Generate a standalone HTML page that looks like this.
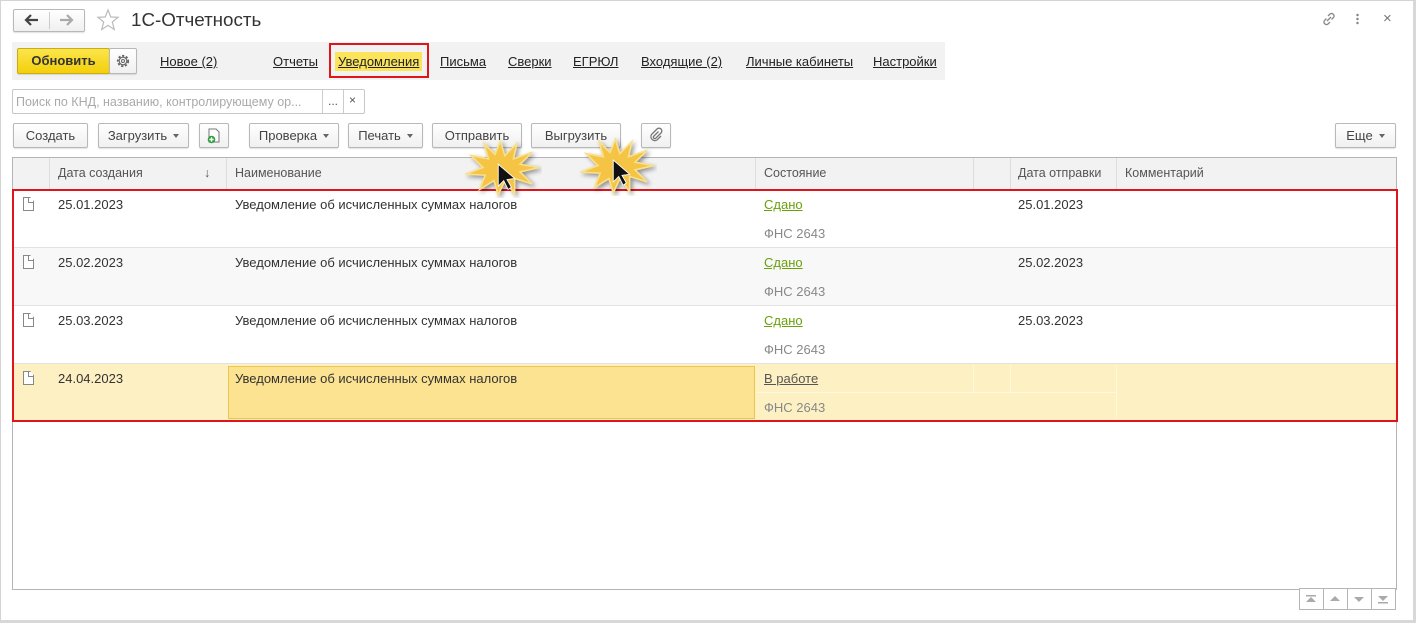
<!DOCTYPE html>
<html><head><meta charset="utf-8"><style>
*{box-sizing:border-box;margin:0;padding:0}
body{width:1416px;height:623px;background:#fff;font-family:"Liberation Sans",Arial,sans-serif;font-size:12px;color:#333;position:relative;overflow:hidden}
.a{position:absolute}
.frame{left:0;top:0;width:1416px;height:623px;border:1px solid #d4d4d4;border-right:3px solid #d8d8d8;border-bottom:3px solid #d8d8d8}
.btn{position:absolute;height:25px;border:1px solid #b8b8b8;border-radius:2px;background:linear-gradient(#fff,#f0f0f0);box-shadow:0 1px 1px rgba(0,0,0,.12);font-size:13px;color:#444;text-align:center;line-height:23px}
.dd:after{content:"";display:inline-block;border:3px solid transparent;border-top:4px solid #666;margin-left:6px;vertical-align:-1px}
.lnk{position:absolute;top:54px;font-size:13px;color:#222;text-decoration:underline}
.cell{position:absolute;font-size:13px;color:#333}
.hdr{position:absolute;top:166px;font-size:12.5px;color:#555}
.vl{position:absolute;width:1px;background:#ddd}
.doc{position:absolute;width:11px;height:14px;border:1px solid #888;background:#fff;clip-path:polygon(0 0,65% 0,100% 30%,100% 100%,0 100%)}
.doc:after{content:"";position:absolute;right:-1px;top:-1px;width:5px;height:5px;border-left:1px solid #888;border-bottom:1px solid #888}
.green{color:#6aa10c;text-decoration:underline}
.grey{color:#888}
</style></head><body>
<div class="a frame"></div>
<!-- nav -->
<div class="btn" style="left:13px;top:9px;width:72px;height:23px"></div>
<div class="a" style="left:49px;top:12px;width:1px;height:17px;background:#ccc"></div>
<svg class="a" style="left:22px;top:12px" width="18" height="16" viewBox="0 0 18 16"><path d="M16 8H4M9 3L4 8l5 5" fill="none" stroke="#444" stroke-width="2.2"/></svg>
<svg class="a" style="left:58px;top:12px" width="18" height="16" viewBox="0 0 18 16"><path d="M2 8h12M9 3l5 5-5 5" fill="none" stroke="#aaa" stroke-width="2.2"/></svg>
<svg class="a" style="left:96px;top:8px" width="24" height="24" viewBox="0 0 24 24"><polygon points="12,2 14.8,9 22,9.3 16.3,14 18.3,21.5 12,17.3 5.7,21.5 7.7,14 2,9.3 9.2,9" fill="none" stroke="#bbb" stroke-width="1.2"/></svg>
<div class="a" style="left:131px;top:9px;font-size:18.8px;color:#333">1С-Отчетность</div>
<svg class="a" style="left:1320px;top:10px" width="18" height="18" viewBox="0 0 18 18"><g fill="none" stroke="#888" stroke-width="1.3"><path d="M8 6l2-2a2.5 2.5 0 013.5 3.5l-2 2"/><path d="M10 12l-2 2a2.5 2.5 0 01-3.5-3.5l2-2"/><path d="M7 11l4-4"/></g></svg>
<div class="a" style="left:1356px;top:13px;width:3px;height:12px;background:radial-gradient(circle,#888 1px,transparent 1.5px) 0 0/3px 4px"></div>
<div class="a" style="left:1383px;top:10px;font-size:15px;color:#777">×</div>
<!-- tab bar -->
<div class="a" style="left:12px;top:42px;width:933px;height:38px;background:#f2f2f2"></div>
<div class="btn" style="left:17px;top:48px;width:93px;height:26px;background:linear-gradient(#fbe54b,#f3cf0b);border-color:#c9ad12;font-weight:bold;color:#333;line-height:24px;font-size:13px">Обновить</div>
<div class="btn" style="left:109px;top:48px;width:28px;height:26px"></div>
<svg class="a" style="left:115px;top:53px" width="16" height="16" viewBox="0 0 16 16"><circle cx="8" cy="8" r="5.2" fill="none" stroke="#666" stroke-width="1.8" stroke-dasharray="2.2 1.7"/><circle cx="8" cy="8" r="3.8" fill="none" stroke="#666" stroke-width="1.1"/><circle cx="8" cy="8" r="1.5" fill="none" stroke="#666"/></svg>
<span class="lnk" style="left:160px">Новое (2)</span>
<span class="lnk" style="left:273px">Отчеты</span>
<div class="a" style="left:329px;top:43px;width:100px;height:35px;border:2px solid #e0141b"></div>
<span class="lnk" style="left:335px;top:52px;background:#fbe45a;padding:2px 3px;">Уведомления</span>
<span class="lnk" style="left:440px">Письма</span>
<span class="lnk" style="left:508px">Сверки</span>
<span class="lnk" style="left:573px">ЕГРЮЛ</span>
<span class="lnk" style="left:641px">Входящие (2)</span>
<span class="lnk" style="left:746px">Личные кабинеты</span>
<span class="lnk" style="left:873px">Настройки</span>
<!-- search -->
<div class="a" style="left:12px;top:89px;width:353px;height:25px;border:1px solid #c8c8c8;border-radius:2px;background:#fff"></div>
<div class="a" style="left:16px;top:95px;font-size:12.5px;color:#aaa">Поиск по КНД, названию, контролирующему ор...</div>
<div class="a" style="left:322px;top:90px;width:1px;height:23px;background:#ccc"></div>
<div class="a" style="left:343px;top:90px;width:1px;height:23px;background:#ccc"></div>
<div class="a" style="left:328px;top:94px;color:#555">...</div>
<div class="a" style="left:349px;top:93px;color:#555;font-size:12px">×</div>
<!-- buttons -->
<div class="btn" style="left:13px;top:123px;width:75px">Создать</div>
<div class="btn dd" style="left:98px;top:123px;width:91px">Загрузить</div>
<div class="btn" style="left:199px;top:123px;width:30px"></div>
<svg class="a" style="left:205px;top:127px" width="18" height="18" viewBox="0 0 18 18"><path d="M4 2h7l3 3v10H4z" fill="#fff" stroke="#777"/><circle cx="6.5" cy="12.5" r="3.8" fill="#2e9e3c"/><path d="M6.5 10.3v4.4M4.3 12.5h4.4" stroke="#fff" stroke-width="1.4"/></svg>
<div class="btn dd" style="left:249px;top:123px;width:90px">Проверка</div>
<div class="btn dd" style="left:348px;top:123px;width:75px">Печать</div>
<div class="btn" style="left:432px;top:123px;width:90px">Отправить</div>
<div class="btn" style="left:531px;top:123px;width:90px">Выгрузить</div>
<div class="btn" style="left:641px;top:123px;width:30px"></div>
<svg class="a" style="left:648px;top:127px" width="16" height="16" viewBox="0 0 16 16"><path d="M10.5 4.5l-5 5a1.5 1.5 0 002 2l5.5-5.5a2.7 2.7 0 00-4-4L3.5 7.5a4 4 0 005.5 5.5l4-4" fill="none" stroke="#777" stroke-width="1.3"/></svg>
<div class="btn dd" style="left:1335px;top:123px;width:61px">Еще</div>
<!-- table -->
<div class="a" style="left:12px;top:157px;width:1385px;height:433px;border:1px solid #b5b5b5"></div>
<div class="a" style="left:13px;top:158px;width:1383px;height:32px;background:#f2f2f2;border-bottom:1px solid #ddd"></div>
<div class="vl" style="left:49px;top:158px;height:32px"></div>
<div class="vl" style="left:226px;top:158px;height:32px"></div>
<div class="vl" style="left:755px;top:158px;height:32px"></div>
<div class="vl" style="left:973px;top:158px;height:32px"></div>
<div class="vl" style="left:1010px;top:158px;height:32px"></div>
<div class="vl" style="left:1116px;top:158px;height:32px"></div>
<div class="hdr" style="left:58px">Дата создания</div>
<div class="hdr" style="left:204px">↓</div>
<div class="hdr" style="left:235px">Наименование</div>
<div class="hdr" style="left:764px">Состояние</div>
<div class="hdr" style="left:1018px">Дата отправки</div>
<div class="hdr" style="left:1125px">Комментарий</div>
<!-- rows -->
<div class="a" style="left:13px;top:248px;width:1383px;height:58px;background:#f8f8f8"></div>
<div class="a" style="left:13px;top:247px;width:1383px;height:1px;background:#e2e2e2"></div>
<div class="a" style="left:13px;top:305px;width:1383px;height:1px;background:#e2e2e2"></div>
<div class="a" style="left:13px;top:363px;width:1383px;height:1px;background:#e2e2e2"></div>
<div class="a" style="left:13px;top:364px;width:1383px;height:56px;background:#fdf0c3"></div>
<div class="a" style="left:228px;top:366px;width:527px;height:53px;background:#fce391;border:1px solid #ecc64c"></div>
<div class="a" style="left:756px;top:392px;width:360px;height:1px;background:#fff8e0"></div>
<div class="a" style="left:973px;top:365px;width:1px;height:27px;background:#fff8e0"></div>
<div class="a" style="left:1010px;top:365px;width:1px;height:27px;background:#fff8e0"></div>
<div class="a" style="left:1116px;top:365px;width:1px;height:54px;background:#fff8e0"></div>

<div class="doc" style="left:23px;top:197px"></div>
<div class="cell" style="left:58px;top:197px">25.01.2023</div>
<div class="cell" style="left:235px;top:197px">Уведомление об исчисленных суммах налогов</div>
<div class="cell green" style="left:764px;top:197px">Сдано</div>
<div class="cell grey" style="left:764px;top:226px">ФНС 2643</div>
<div class="cell" style="left:1018px;top:197px">25.01.2023</div>

<div class="doc" style="left:23px;top:255px"></div>
<div class="cell" style="left:58px;top:255px">25.02.2023</div>
<div class="cell" style="left:235px;top:255px">Уведомление об исчисленных суммах налогов</div>
<div class="cell green" style="left:764px;top:255px">Сдано</div>
<div class="cell grey" style="left:764px;top:284px">ФНС 2643</div>
<div class="cell" style="left:1018px;top:255px">25.02.2023</div>

<div class="doc" style="left:23px;top:313px"></div>
<div class="cell" style="left:58px;top:313px">25.03.2023</div>
<div class="cell" style="left:235px;top:313px">Уведомление об исчисленных суммах налогов</div>
<div class="cell green" style="left:764px;top:313px">Сдано</div>
<div class="cell grey" style="left:764px;top:342px">ФНС 2643</div>
<div class="cell" style="left:1018px;top:313px">25.03.2023</div>

<div class="doc" style="left:23px;top:371px"></div>
<div class="cell" style="left:58px;top:371px">24.04.2023</div>
<div class="cell" style="left:235px;top:371px">Уведомление об исчисленных суммах налогов</div>
<div class="cell" style="left:764px;top:371px;color:#555;text-decoration:underline">В работе</div>
<div class="cell grey" style="left:764px;top:400px">ФНС 2643</div>

<div class="a" style="left:12px;top:189px;width:1386px;height:233px;border:2px solid #e0141b"></div>
<!-- bottom nav -->
<div class="a" style="left:1299px;top:588px;width:97px;height:22px;border:1px solid #b5b5b5;background:#fff"></div>
<div class="a" style="left:1323px;top:588px;width:1px;height:22px;background:#b5b5b5"></div>
<div class="a" style="left:1347px;top:588px;width:1px;height:22px;background:#b5b5b5"></div>
<div class="a" style="left:1371px;top:588px;width:1px;height:22px;background:#b5b5b5"></div>
<svg class="a" style="left:1299px;top:588px" width="97" height="22"><g fill="#aaa"><rect x="7" y="7" width="10" height="1.5"/><polygon points="7,14 17,14 12,9"/><polygon points="31,13 41,13 36,8"/><polygon points="55,9 65,9 60,14"/><polygon points="79,8 89,8 84,13"/><rect x="79" y="14" width="10" height="1.5"/></g></svg>
<!-- starbursts -->
<svg class="a" style="left:460px;top:136px" width="82" height="62" viewBox="0 0 75 55"><polygon points="37,4 41,17 52,6 49,20 66,14 55,25 72,28 55,32 66,43 50,38 50,52 41,40 35,53 31,40 18,48 23,35 5,34 21,28 10,17 26,20 22,6 32,16" fill="#f6c445" stroke="#f9e08a" stroke-width="1.5" style="filter:drop-shadow(2px 2px 2px rgba(0,0,0,.4))"/><polygon points="35,25 35,45 40,40 44,48 47,46 43,39 50,38" fill="#111" stroke="#fff" stroke-width=".8"/></svg>
<svg class="a" style="left:575px;top:134px" width="82" height="62" viewBox="0 0 75 55"><polygon points="37,4 41,17 52,6 49,20 66,14 55,25 72,28 55,32 66,43 50,38 50,52 41,40 35,53 31,40 18,48 23,35 5,34 21,28 10,17 26,20 22,6 32,16" fill="#f6c445" stroke="#f9e08a" stroke-width="1.5" style="filter:drop-shadow(2px 2px 2px rgba(0,0,0,.4))"/><polygon points="35,23 35,43 40,38 44,46 47,44 43,37 50,36" fill="#111" stroke="#fff" stroke-width=".8"/></svg>
</body></html>
